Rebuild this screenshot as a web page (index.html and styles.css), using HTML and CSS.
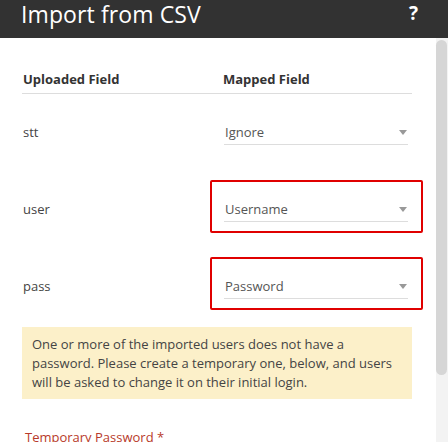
FILE: index.html
```html
<!DOCTYPE html>
<html lang="en">
<head>
<meta charset="utf-8">
<title>Import from CSV</title>
<link rel="stylesheet" href="styles.css">
</head>
<body>
<div class="dialog">
  <header class="topbar">
    <h1 class="title">Import from CSV</h1>
    <span class="help">?</span>
  </header>
  <div class="body-area">
    <div class="content">
      <div class="map-head">
        <div class="col-left">Uploaded Field</div>
        <div class="col-right">Mapped Field</div>
      </div>

      <div class="map-row">
        <div class="field-name">stt</div>
        <div class="select-wrap">
          <div class="select"><span>Ignore</span><i class="caret"></i></div>
        </div>
      </div>

      <div class="map-row">
        <div class="field-name">user</div>
        <div class="select-wrap error">
          <div class="select"><span>Username</span><i class="caret"></i></div>
        </div>
      </div>

      <div class="map-row">
        <div class="field-name">pass</div>
        <div class="select-wrap error">
          <div class="select"><span>Password</span><i class="caret"></i></div>
        </div>
      </div>

      <div class="notice">One or more of the imported users does not have a password. Please create a temporary one, below, and users will be asked to change it on their initial login.</div>

      <label class="req-label">Temporary Password *</label>
      <div class="text-input"></div>
    </div>
    <div class="scrollbar"><div class="thumb"></div></div>
  </div>
</div>
</body>
</html>
```

FILE: styles.css
```css
html, body {
  margin: 0;
  padding: 0;
  background: #ffffff;
}

body {
  font-family: "Open Sans", "Noto Sans", sans-serif;
  color: #333333;
}

.dialog {
  width: 448px;
  height: 442px;
  display: flex;
  flex-direction: column;
  overflow: hidden;
}

.topbar {
  height: 38px;
  flex: 0 0 38px;
  background: #323232;
  color: #ffffff;
  display: flex;
  align-items: flex-start;
  justify-content: space-between;
  padding: 0 30px 0 21px;
  box-sizing: border-box;
}

.title {
  margin: 0;
  font-size: 23px;
  font-weight: 400;
  line-height: 28px;
  letter-spacing: 0.1px;
}

.help {
  font-size: 19px;
  font-weight: 700;
  line-height: 26px;
}

.body-area {
  flex: 1 1 auto;
  display: flex;
  min-height: 0;
  overflow: hidden;
}

.content {
  flex: 0 0 436px;
  width: 436px;
  min-width: 0;
  box-sizing: border-box;
  padding: 0 24px 0 22px;
}

.scrollbar {
  flex: 0 0 12px;
  width: 12px;
  background: #f3f3f3;
  padding-top: 2px;
  box-sizing: border-box;
}

.thumb {
  height: 335px;
  background: #d6d6d6;
  border-radius: 6px;
  margin-right: 1px;
}

.map-head {
  display: grid;
  grid-template-columns: 188px 1fr;
  margin-top: 24px;
  height: 31px;
  border-bottom: 1px solid #dddddd;
  font-size: 13px;
  font-weight: 700;
  line-height: 18px;
  color: #333333;
}

.col-left {
  padding-top: 8px;
  padding-left: 1px;
}

.col-right {
  padding-top: 8px;
  padding-left: 13px;
}

.map-row {
  display: grid;
  grid-template-columns: 188px 213px;
  height: 77px;
  align-items: start;
}

.field-name {
  padding-top: 29px;
  padding-left: 1px;
  font-size: 13px;
  line-height: 18px;
  color: #444444;
}

.select-wrap {
  margin-top: 9px;
  height: 53px;
  box-sizing: border-box;
  border: 2px solid transparent;
  border-radius: 2px;
  padding: 14px 13px 0 12px;
}

.select-wrap.error {
  border-color: #e00000;
}

.select {
  height: 26px;
  box-sizing: border-box;
  border-bottom: 1px solid #dddddd;
  display: flex;
  align-items: center;
  justify-content: space-between;
  padding: 0 1px 0 1px;
  font-size: 13px;
  color: #555555;
}

.caret {
  width: 0;
  height: 0;
  border-left: 4px solid transparent;
  border-right: 4px solid transparent;
  border-top: 5px solid #999999;
  margin-top: 1px;
}

.notice {
  margin-top: 2px;
  background: #fcf0c9;
  padding: 8px 14px 7px 10px;
  font-size: 13px;
  line-height: 19px;
  color: #444444;
}

.req-label {
  display: block;
  margin-top: 29px;
  padding-left: 3px;
  font-size: 13px;
  line-height: 18px;
  color: #b83a2a;
}

.text-input {
  height: 26px;
  margin-top: 4px;
  border-bottom: 1px solid #dddddd;
}
```
